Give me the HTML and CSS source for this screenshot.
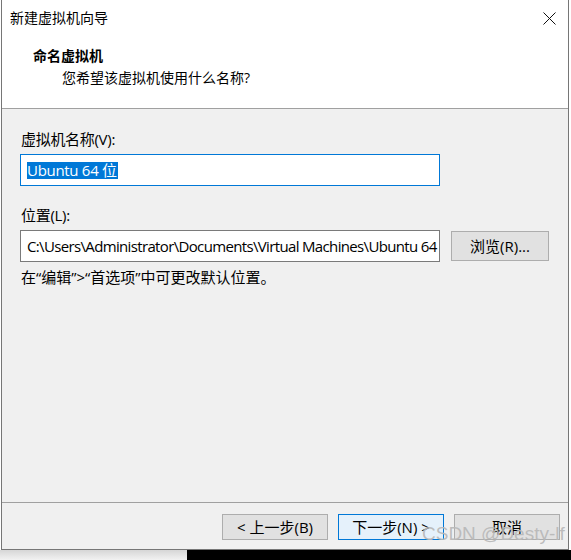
FILE: index.html
```html
<!DOCTYPE html>
<html lang="zh-CN">
  <head>
    <meta charset="UTF-8" />
    <title>新建虚拟机向导</title>
    <link rel="stylesheet" href="styles.css">
  </head>
  <body>
    <div class="window">
      <div class="top">
        <div class="titlebar">
          <span class="title">新建虚拟机向导</span>
          <svg class="close" width="13" height="13" viewBox="0 0 13 13">
            <path d="M0.5 0.5 L12.5 12.5 M12.5 0.5 L0.5 12.5" stroke="#111" stroke-width="1" fill="none" />
          </svg>
        </div>
        <div class="header">
          <div class="header-title">命名虚拟机</div>
          <div class="header-sub">您希望该虚拟机使用什么名称?</div>
        </div>
      </div>

      <div class="content">
        <div class="field-label">虚拟机名称(V):</div>
        <div class="name-box"><span class="selected">Ubuntu 64 位</span></div>

        <div class="field-label second">位置(L):</div>
        <div class="loc-row">
          <div class="loc-box">C:\Users\Administrator\Documents\Virtual Machines\Ubuntu 64</div>
          <button class="btn browse">浏览(R)...</button>
        </div>
        <div class="hint">在“编辑”&gt;“首选项”中可更改默认位置。</div>
      </div>

      <div class="footer">
        <button class="btn">&lt; 上一步(B)</button>
        <button class="btn default">下一步(N) &gt;</button>
        <button class="btn">取消</button>
      </div>
    </div>

    <div class="desk">
      <div class="shadow"></div>
      <div class="black"></div>
    </div>

    <div class="watermark">CSDN @Desty-lf</div>
  </body>
</html>
```

FILE: styles.css
```css
body {
  margin: 0;
  background: #fff;
  font-family: "Open Sans", "Noto Sans CJK SC", sans-serif;
  font-size: 15px;
  color: #000;
  width: 571px;
  height: 560px;
  overflow: hidden;
  position: relative;
}
.window {
  margin-left: 1px;
  width: 568px;
  height: 550px;
  box-sizing: border-box;
  border: 1px solid #767676;
  border-top: none;
  background: #f0f0f0;
  display: flex;
  flex-direction: column;
}
.top {
  background: #fff;
  height: 109px;
  box-sizing: border-box;
  border-bottom: 1px solid #a0a0a0;
}
.titlebar {
  height: 36px;
  display: flex;
  align-items: center;
  justify-content: space-between;
  padding: 0 12px 0 8px;
}
.title {
  font-size: 14px;
  line-height: 20px;
}
.close {
  display: block;
}
.header {
  padding-top: 10px;
}
.header-title {
  padding-left: 31px;
  font-size: 14px;
  font-weight: bold;
  line-height: 20px;
}
.header-sub {
  padding-left: 60px;
  margin-top: 2px;
  font-size: 14px;
  line-height: 20px;
}

/* form area */
.content {
  flex: 1;
  padding: 20px 0 0 18px;
}
.field-label {
  line-height: 20px;
  padding-left: 1px;
  margin-bottom: 5px;
  letter-spacing: -0.3px;
}
.field-label.second {
  margin-top: 19px;
}
.name-box {
  width: 420px;
  height: 32px;
  box-sizing: border-box;
  border: 1px solid #0078d7;
  background: #fff;
  padding: 5px 6px 0;
}
.selected {
  display: inline-block;
  background: #0078d7;
  color: #fff;
  line-height: 17px;
  padding-right: 1px;
  letter-spacing: -0.3px;
}
.loc-row {
  display: flex;
  align-items: center;
  gap: 11px;
}
.loc-box {
  width: 420px;
  height: 32px;
  box-sizing: border-box;
  border: 1px solid #7a7a7a;
  background: #fff;
  padding: 0 6px;
  line-height: 30px;
  white-space: nowrap;
  overflow: hidden;
  letter-spacing: -0.65px;
}
.hint {
  margin-top: 5px;
  padding-left: 1px;
  line-height: 20px;
}

/* buttons */
.btn {
  font-family: inherit;
  font-size: 15px;
  color: #000;
  background: #e1e1e1;
  border: 1px solid #adadad;
  width: 106px;
  height: 26px;
  padding: 0;
  line-height: 22px;
}
.browse {
  width: 98px;
  height: 30px;
}
.btn.default {
  background: #e5f1fb;
  border-color: #0078d7;
}
.footer {
  border-top: 1px solid #a0a0a0;
  height: 47px;
  box-sizing: border-box;
  display: flex;
  justify-content: flex-end;
  gap: 10px;
  padding: 11px 8px 0 0;
}

.desk {
  display: flex;
  height: 10px;
}
.shadow {
  width: 187px;
  background: linear-gradient(#d6d6d6, #f2f2f2);
}
.black {
  flex: 1;
  background: #000;
}
.watermark {
  position: absolute;
  left: 422px;
  top: 523px;
  font-family: "Liberation Sans", sans-serif;
  font-size: 19px;
  line-height: 22px;
  color: rgba(185, 185, 185, 0.95);
}
```
